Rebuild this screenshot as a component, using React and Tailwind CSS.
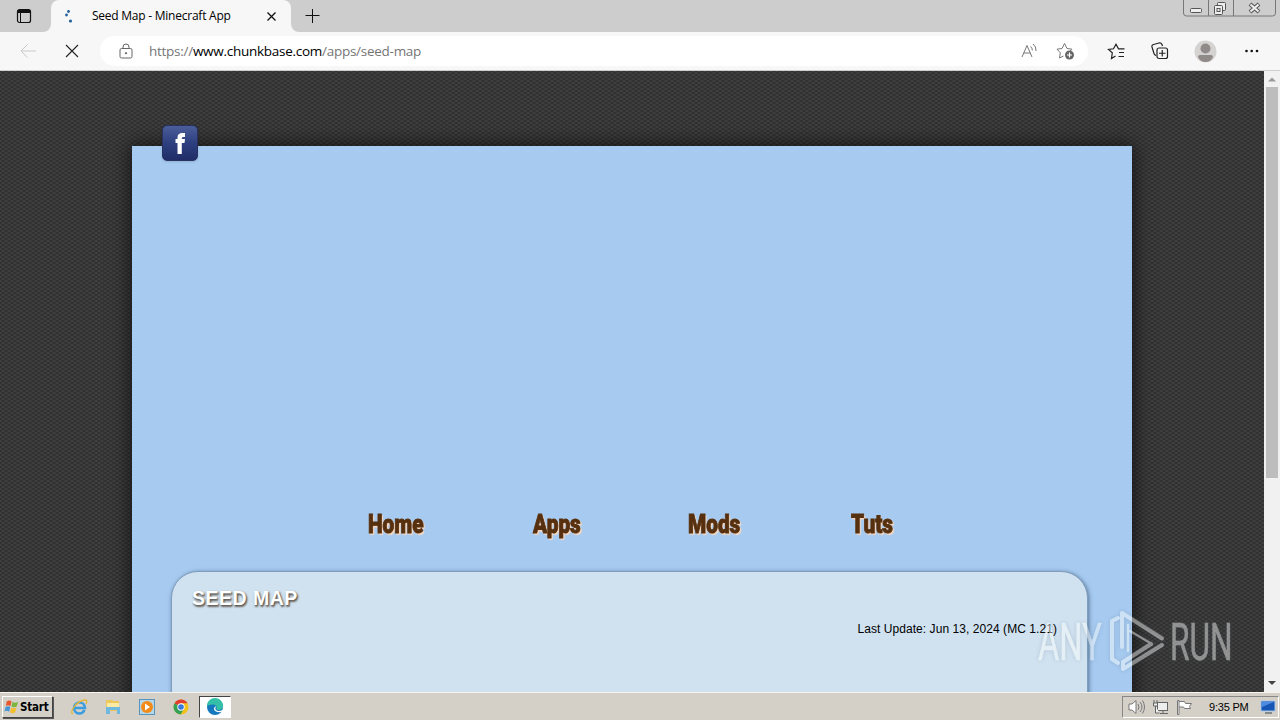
import React from "react";

const navLinks = [
    { label: "Home", box: "ml-[236px] w-[165px]" },
    { label: "Apps", box: "w-[155px]" },
    { label: "Mods", box: "w-[163px]" },
    { label: "Tuts", box: "w-[80px]" },
];

function TabBar() {
    return (
        <div className="flex h-8 shrink-0 items-start bg-[#cdcdcd] font-['Open_Sans','Noto_Sans',sans-serif]">
            <div className="h-8 w-[51px] bg-[#cdcdcd]">
                <svg className="ml-4 mt-2" width="16" height="16" viewBox="0 0 16 16" fill="none" stroke="#111">
                    <rect x="1.5" y="1.5" width="13" height="13" rx="2" strokeWidth="1.2" />
                    <path d="M2 3.5h12M2 2.5h12M2 4.5h12M4.5 4v10" />
                </svg>
            </div>
            <div className="relative flex h-8 w-60 items-center rounded-t-lg bg-[#f7f7f7]">
                <svg className="absolute -left-2 bottom-0" width="8" height="8" viewBox="0 0 8 8">
                    <path d="M8 0v8H0a8 8 0 0 0 8-8z" fill="#f7f7f7" />
                </svg>
                <svg className="absolute -right-2 bottom-0" width="8" height="8" viewBox="0 0 8 8">
                    <path d="M0 0v8h8a8 8 0 0 1-8-8z" fill="#f7f7f7" />
                </svg>
                <svg className="ml-3 shrink-0" width="14" height="16" viewBox="0 0 14 16" fill="#25619b">
                    <circle cx="5.5" cy="3.5" r="1.4" />
                    <circle cx="3.5" cy="7" r="1.4" />
                    <circle cx="7.5" cy="13" r="1.6" />
                </svg>
                <span className="ml-[15px] w-[174px] whitespace-nowrap text-[12px] leading-4 tracking-[-0.24px] text-black">
                    Seed Map - Minecraft App
                </span>
                <svg width="11" height="11" viewBox="0 0 11 11" stroke="#111" strokeWidth="1.3">
                    <path d="M1.5 1.5l8 8M9.5 1.5l-8 8" />
                </svg>
            </div>
            <svg className="ml-[14px] mt-2" width="16" height="16" viewBox="0 0 16 16" stroke="#111">
                <path d="M7.5 1v14M.5 7.5h14" />
            </svg>
            <svg className="ml-auto" width="98" height="17" viewBox="0 0 98 17" fill="none" stroke="#777">
                <path d="M1.5 0v13q0 3 3 3h86q3 0 3-3V0M26.5 0v16M51.5 0v16" />
                <rect x="8.5" y="8.5" width="11" height="4" rx="1" stroke="#555" fill="#eee" />
                <rect x="35.5" y="2.5" width="8" height="8" rx="1" stroke="#555" fill="#eee" />
                <rect x="32.5" y="5.5" width="8" height="9" rx="1" stroke="#555" fill="#eee" />
                <rect x="35" y="8.5" width="3" height="3" stroke="#555" />
                <path d="M68 4l9 8M77 4l-9 8" stroke="#555" strokeWidth="4.2" />
                <path d="M68.5 4.500l8 7M76.500 4.500l-8 7" stroke="#eee" strokeWidth="2.2" />
            </svg>
        </div>
    );
}

function Toolbar() {
    return (
        <div className="flex h-[39px] shrink-0 items-center border-b border-[#cfcfcf] bg-[#f7f7f7]">
            <svg className="ml-5" width="17" height="16" viewBox="0 0 17 16" fill="none" stroke="#c9c9c9">
                <path d="M16 8H1M7.5 1.5L1 8l6.5 6.5" />
            </svg>
            <svg className="ml-[28px]" width="14" height="14" viewBox="0 0 14 14" stroke="#222" strokeWidth="1.1">
                <path d="M1 1l12 12M13 1L1 13" />
            </svg>
            <div className="ml-[21px] flex h-[30px] w-[988px] items-center rounded-full bg-white">
                <svg className="ml-[19px] -mt-px" width="14" height="16" viewBox="0 0 14 16" fill="none" stroke="#666">
                    <rect x="1" y="5.5" width="12" height="9.5" rx="1.5" />
                    <path d="M4 5.500V4a3 3 0 0 1 6 0v1.500" />
                    <circle cx="7" cy="10.2" r="0.7" fill="#555" />
                </svg>
                <span className="ml-4 whitespace-nowrap font-['Open_Sans','Noto_Sans',sans-serif] text-[13.5px] leading-5 tracking-[-0.27px] text-[#767676]">
                    https://<span className="text-black">www.chunkbase.com</span>/apps/seed-map
                </span>
                <svg className="ml-auto" width="17" height="16" viewBox="0 0 17 16" fill="none" stroke="#777">
                    <path d="M2 14L7 2.500l5 11.500M3.700 10h6.700M10.500 3.500q2 1.500 1.800 4M13 1q3.500 2.500 3 7" />
                </svg>
                <svg className="ml-[19px] mr-[13px]" width="19" height="18" viewBox="0 0 19 18" fill="none" stroke="#777">
                    <path d="M7.500 14l-4 2 .8-5.200L1 7.200l5-.7L8.500 1.500l2.500 5 5 .7-2 2" />
                    <circle cx="13.5" cy="13" r="4.5" fill="#666" stroke="none" />
                    <path d="M13.500 10.500v5M11 13h5" stroke="#fff" strokeWidth="1.2" />
                </svg>
            </div>
            <svg className="ml-[19px]" width="18" height="17" viewBox="0 0 18 17" fill="none" stroke="#222" strokeWidth="1.2">
                <path d="M8.500 13l-4 2.500.8-5.700L1.500 6.500l5-.7 2.500-4.500 2.500 4.500h6M12 9.500h5M11.500 13.500H17" />
            </svg>
            <svg className="ml-[26px]" width="18" height="18" viewBox="0 0 18 18" fill="none" stroke="#222" strokeWidth="1.2">
                <path d="M5 13.500q-1.500-.5-2-2L1 5q-.5-2 1.500-2.500L8 1q2-.5 3 1.500l.5 1.500" />
                <rect x="6" y="6" width="10.5" height="10.5" rx="2" />
                <path d="M11.250 8v6.500M8 11.250h6.500" />
            </svg>
            <svg className="ml-[25px]" width="23" height="23" viewBox="0 0 23 23">
                <circle cx="11.5" cy="11.5" r="11" fill="#d5d3d1" />
                <circle cx="11.5" cy="8.5" r="5" fill="#908b88" />
                <path d="M4 17q0-2 2-2h11q2 0 2 2-2 5-7.500 5T4 17z" fill="#908b88" />
            </svg>
            <svg className="ml-[27px]" width="16" height="4" viewBox="0 0 16 4" fill="#111">
                <circle cx="2.5" cy="2" r="1.3" />
                <circle cx="7.7" cy="2" r="1.3" />
                <circle cx="13" cy="2" r="1.3" />
            </svg>
        </div>
    );
}

function FacebookBadge() {
    return (
        <div className="absolute -top-[21px] left-[30px] flex h-9 w-9 justify-center overflow-hidden rounded-[5px] border border-[#27315f] bg-linear-to-b from-[#4b5d99] via-[#2e3f80] to-[#202d68] shadow-sm">
            <svg width="16" height="34" viewBox="0 0 16 34">
                <path
                    d="M5.500 28V17H3.500v-4h2v-1.500q0-4.500 5-4.500h2.500V11h-1.500q-1.700 0-1.700 1.300V13H13l-.5 4H9.800v11z"
                    fill="#fff"
                />
            </svg>
        </div>
    );
}

function Page() {
    return (
        <div className="flex-1 overflow-hidden bg-[#424242] bg-[radial-gradient(#313131_30%,transparent_60%),radial-gradient(#313131_30%,transparent_60%)] bg-size-[6px_4px] bg-position-[0_0,3px_2px]">
            <div className="relative ml-[132px] mt-[75px] h-[700px] w-[1000px] bg-[#a6caf0] pt-[362px] shadow-[0_0_18px_2px_rgba(0,0,0,0.65)]">
                <FacebookBadge />
                <nav className="flex h-[63px]">
                    {navLinks.map((link) => (
                        <div key={link.label} className={link.box}>
                            <a className="inline-block origin-left scale-x-[0.8] whitespace-nowrap font-[Roboto,sans-serif] text-[26px] font-black leading-8 text-[#56300f] [-webkit-text-stroke:0.9px_#56300f] [text-shadow:1px_1px_2px_#fbd9bc,2px_2px_1px_#ecd5c8]">
                                {link.label}
                            </a>
                        </div>
                    ))}
                </nav>
                <main className="ml-[39px] h-[300px] w-[917px] rounded-t-[27px] border border-[#7f9dbd] bg-[#d0e2f0] px-5 pt-[14px] font-['Liberation_Sans',Arial,sans-serif] shadow-[1px_1px_4px_#547391]">
                    <h1 className="text-[19.5px] font-bold leading-6 tracking-[0.5px] text-white [text-shadow:1px_1px_2px_#555,1px_2px_2px_#847b70]">
                        SEED MAP
                    </h1>
                    <p className="mr-[10px] mt-[10px] text-right text-[12px] leading-[18px] tracking-[0.06px] text-black">
                        Last Update: Jun 13, 2024 (MC 1.21)
                    </p>
                </main>
            </div>
        </div>
    );
}

function Scrollbar() {
    return (
        <div className="flex w-4 shrink-0 flex-col items-center bg-[#f1f1f1]">
            <svg width="16" height="16" viewBox="0 0 16 16">
                <path d="M4 10.500l4-4 4 4z" fill="#999" />
            </svg>
            <div className="h-[391px] w-3 bg-[#bdbdbd]" />
            <svg className="mt-auto" width="16" height="17" viewBox="0 0 16 17">
                <path d="M4 6l4 4 4-4z" fill="#444" />
            </svg>
        </div>
    );
}

function Watermark() {
    return (
        <div className="absolute left-[1038px] top-[609px] flex h-16 items-center font-[Roboto,sans-serif] text-[51px] leading-[64px] text-white opacity-45 drop-shadow-[0_0_2px_rgba(80,100,120,0.5)]">
            <div className="w-[68px] pt-1">
                <span className="inline-block origin-left scale-x-[0.64] [-webkit-text-stroke:0.5px_white]">ANY</span>
            </div>
            <svg width="60" height="64" viewBox="0 0 60 64" fill="none" stroke="#fff" strokeWidth="4" strokeLinejoin="round" strokeLinecap="round">
                <path d="M12 9l-6 3v38l6 4" />
                <path d="M16 38V4l40 25.500" />
                <path d="M56 36L17 60v-7l28-18" />
                <path d="M22 16v26M24 22l22 13" strokeWidth="2.5" />
            </svg>
            <div className="w-[70px] pl-1 pt-1">
                <span className="inline-block origin-left scale-x-[0.62] [-webkit-text-stroke:0.5px_white]">RUN</span>
            </div>
        </div>
    );
}

function StartButton() {
    return (
        <div className="ml-0.5 flex h-[22px] w-[51px] items-center border border-b-[#444] border-l-white border-r-[#444] border-t-white shadow-[1px_1px_0_#555]">
            <svg width="17" height="18" viewBox="0 0 18 18" className="shrink-0">
                <path d="M4 3q3-2 5 0L8 8q-3-1.500-5 0z" fill="#e8562b" />
                <path d="M10 3.500q3 2 6 0l-1.500 5q-3 1.500-5.500 0z" fill="#7db53c" />
                <path d="M2.700 9q3-1.500 5 0l-1.200 5q-3-2-5 0z" fill="#4596d6" />
                <path d="M8.700 9.500q3 1.500 5.500 0L13 14.500q-3 2-5.500 0z" fill="#f5bd2d" />
            </svg>
            <span className="pt-px font-['DejaVu_Sans_Condensed','DejaVu_Sans',sans-serif] text-[11.5px] font-bold tracking-[-0.2px] text-black">
                Start
            </span>
        </div>
    );
}

function Taskbar() {
    return (
        <div className="flex h-7 shrink-0 items-center border-t border-[#f5f3ee] bg-[#d4d0c8] pt-px">
            <StartButton />
            <svg className="ml-[17px]" width="18" height="18" viewBox="0 0 18 18" fill="none">
                <path d="M14.500 12q-1.500 3.500-5.500 3.500A5.500 5.500 0 1 1 15 10H4" stroke="#3b9de0" strokeWidth="2.6" />
                <path d="M3 16q-3-1 1-7t11-7q3 0 1 4" stroke="#e4b637" strokeWidth="1.3" />
            </svg>
            <svg className="ml-4" width="18" height="18" viewBox="0 0 18 18">
                <path d="M2 2h6l1 1h6v10H2z" fill="#edc75a" />
                <path d="M3 5h12v4H3z" fill="#fbeaa4" />
                <path d="M2 9h14v7h-3v-4H6v4H2z" fill="#70b8df" />
            </svg>
            <svg className="ml-4" width="18" height="18" viewBox="0 0 18 18">
                <rect x="1.5" y="1.5" width="15" height="15" fill="#b7d7e9" stroke="#5594bd" />
                <circle cx="9" cy="9" r="6" fill="#f28a17" />
                <path d="M7 5.500v7l5-3.500z" fill="#fff" />
            </svg>
            <svg className="ml-4" width="18" height="18" viewBox="0 0 18 18">
                <circle cx="9" cy="9" r="7.5" fill="#f4c21c" />
                <path d="M9 9L2.500 5.300A7.500 7.500 0 0 1 15.500 5.300H9z" fill="#df3e31" />
                <path d="M9 9L2.500 5.300A7.500 7.500 0 0 0 8.500 16.500L12 11z" fill="#35a156" />
                <circle cx="9" cy="9" r="3.7" fill="#fff" />
                <circle cx="9" cy="9" r="2.8" fill="#3979de" />
            </svg>
            <div className="ml-[9px] flex h-[22px] w-8 items-center justify-center border border-b-white border-l-[#444] border-r-white border-t-[#444] bg-white">
                <svg width="18" height="18" viewBox="0 0 18 18">
                    <circle cx="9" cy="9" r="8" fill="#1577bd" />
                    <path d="M1 8a8 8 0 0 1 16 0q0 4-4.500 4-2.500 0-2-2 .5-3-3-3.500Q4 6 1 8z" fill="#34bfa8" />
                    <path d="M10 8.500q-2 3.500 2 4.500 2 .3 5-1.500l-.5 2q-3.500 1.500-6.500 0-3.500-2-1-5z" fill="#fff" />
                </svg>
            </div>
            <div className="ml-auto mr-px flex h-[22px] w-[157px] items-center border border-b-white border-l-[#888] border-r-white border-t-[#888]">
                <svg className="ml-[5px]" width="18" height="16" viewBox="0 0 18 16" fill="#fff" stroke="#777">
                    <path d="M1 5h3l4-3.500v13L4 11H1z" />
                    <path d="M10 5q2 3 0 6M12 3q4 5 0 10M14.500 1.500q4 6.500 0 13" fill="none" />
                </svg>
                <svg className="ml-[6px]" width="18" height="17" viewBox="0 0 18 17" fill="#eee" stroke="#666">
                    <rect x="5.5" y="3.5" width="10" height="8" />
                    <path d="M8 14.500h8M11 12v2M2 1v3M5 1v3M1.500 4h4v3h-4zM3.500 7v7h4" />
                </svg>
                <svg className="ml-[6px]" width="18" height="17" viewBox="0 0 18 17" fill="#fff" stroke="#777">
                    <path d="M2.500 2.500h6l1 2h6l-2 3 1 2h-6l-1-1.500h-5z" />
                    <path d="M1.500 1.500h1.500v14H1.500z" />
                </svg>
                <span className="ml-[15px] whitespace-nowrap font-['Liberation_Sans',Arial,sans-serif] text-[11px] tracking-[-0.2px] text-black">
                    9:35 PM
                </span>
                <svg className="ml-auto mr-px" width="18" height="16" viewBox="0 0 18 16">
                    <path d="M2 2h14v10H2z" fill="#1555b4" stroke="#a7c5ea" />
                    <path d="M3 3h12L3 8z" fill="#4c8be0" />
                    <path d="M6 14h7" stroke="#345" />
                </svg>
            </div>
        </div>
    );
}

export default function App() {
    return (
        <div className="relative flex h-[720px] w-[1280px] flex-col overflow-hidden">
            <TabBar />
            <Toolbar />
            <div className="flex min-h-0 flex-1">
                <Page />
                <Scrollbar />
            </div>
            <Taskbar />
            <Watermark />
        </div>
    );
}
